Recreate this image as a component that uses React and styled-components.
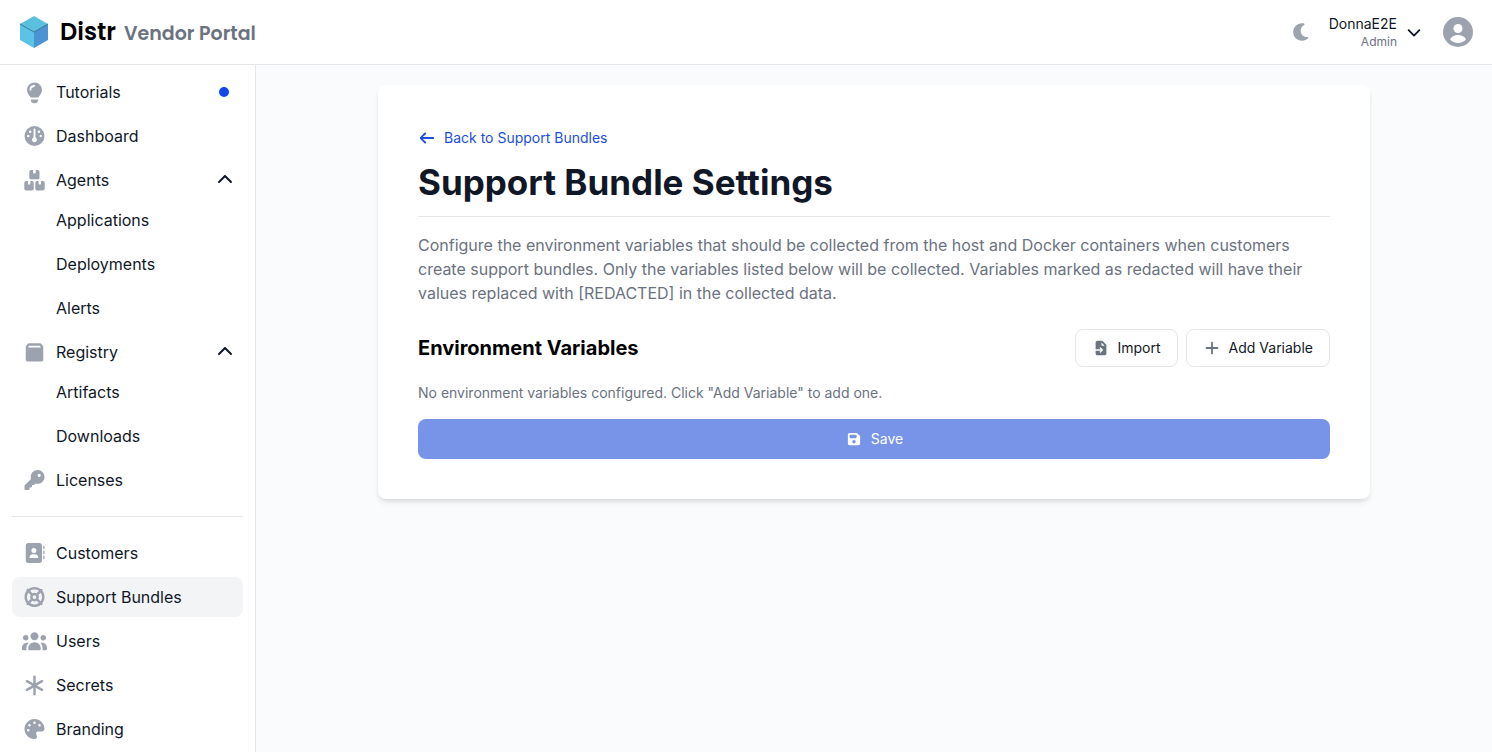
import styled, { createGlobalStyle } from "styled-components";
import {
  FaAddressBook,
  FaFloppyDisk,
  FaGauge,
  FaKey,
  FaLifeRing,
  FaPalette,
} from "react-icons/fa6";

const App = () => {
  return (
    <>
      <GlobalStyle />
      <Header>
        <Brand href="#">
          <Logo />
          <BrandText>
            <BrandName>Distr</BrandName>
            <PortalName>Vendor Portal</PortalName>
          </BrandText>
        </Brand>
        <HeaderRight>
          <ThemeButton aria-label="Toggle dark mode">
            <Icon d={paths.moon} />
          </ThemeButton>
          <OrgButton>
            <OrgText>
              <OrgName>DonnaE2E</OrgName>
              <OrgRole>Admin</OrgRole>
            </OrgText>
            <Icon d={paths.chevronDown} />
          </OrgButton>
          <AvatarButton aria-label="User menu">
            <Avatar />
          </AvatarButton>
        </HeaderRight>
      </Header>
      <Body>
        <Sidebar>
          <NavItem href="#">
            <Icon d={paths.lightbulb} />
            Tutorials
            <Dot />
          </NavItem>
          <NavItem href="#">
            <FaGauge />
            Dashboard
          </NavItem>
          <NavGroup>
            <NavToggle aria-expanded="true">
              <Icon d={paths.boxes} />
              Agents
              <Icon d={paths.chevronUp} />
            </NavToggle>
            <SubList>
              <SubItem href="#">Applications</SubItem>
              <SubItem href="#">Deployments</SubItem>
              <SubItem href="#">Alerts</SubItem>
            </SubList>
          </NavGroup>
          <NavGroup>
            <NavToggle aria-expanded="true">
              <Icon d={paths.box} />
              Registry
              <Icon d={paths.chevronUp} />
            </NavToggle>
            <SubList>
              <SubItem href="#">Artifacts</SubItem>
              <SubItem href="#">Downloads</SubItem>
            </SubList>
          </NavGroup>
          <NavItem href="#">
            <FaKey />
            Licenses
          </NavItem>
          <Divider />
          <NavItem href="#">
            <FaAddressBook />
            Customers
          </NavItem>
          <NavItem href="#" $active>
            <FaLifeRing />
            Support Bundles
          </NavItem>
          <NavItem href="#">
            <Icon d={paths.users} />
            Users
          </NavItem>
          <NavItem href="#">
            <Icon d={paths.asterisk} />
            Secrets
          </NavItem>
          <NavItem href="#">
            <FaPalette />
            Branding
          </NavItem>
        </Sidebar>
        <Main>
          <Card>
            <BackLink href="#">
              <Icon d={paths.arrowLeft} />
              Back to Support Bundles
            </BackLink>
            <Title>Support Bundle Settings</Title>
            <Description>
              Configure the environment variables that should be collected from
              the host and Docker containers when customers create support
              bundles. Only the variables listed below will be collected.
              Variables marked as redacted will have their values replaced with
              [REDACTED] in the collected data.
            </Description>
            <SectionHeader>
              <SectionTitle>Environment Variables</SectionTitle>
              <Actions>
                <OutlineButton>
                  <Icon d={paths.fileImport} />
                  Import
                </OutlineButton>
                <OutlineButton>
                  <Icon d={paths.plus} />
                  Add Variable
                </OutlineButton>
              </Actions>
            </SectionHeader>
            <EmptyText>
              No environment variables configured. Click "Add Variable" to add
              one.
            </EmptyText>
            <SaveButton disabled>
              <FaFloppyDisk />
              Save
            </SaveButton>
          </Card>
        </Main>
      </Body>
    </>
  );
};

export default App;

const paths = {
  moon: "M320 64C178.6 64 64 178.6 64 320C64 461.4 178.6 576 320 576C388.8 576 451.3 548.8 497.3 504.6C504.6 497.6 506.7 486.7 502.6 477.5C498.5 468.3 488.9 462.6 478.8 463.4C473.9 463.8 469 464 464 464C362.4 464 280 381.6 280 280C280 207.9 321.5 145.4 382.1 115.2C391.2 110.7 396.4 100.9 395.2 90.8C394 80.7 386.6 72.5 376.7 70.3C358.4 66.2 339.4 64 320 64z",
  chevronDown:
    "M297.4 470.6C309.9 483.1 330.2 483.1 342.7 470.6L534.7 278.6C547.2 266.1 547.2 245.8 534.7 233.3C522.2 220.8 501.9 220.8 489.4 233.3L320 402.7L150.6 233.4C138.1 220.9 117.8 220.9 105.3 233.4C92.8 245.9 92.8 266.2 105.3 278.7L297.3 470.7z",
  chevronUp:
    "M297.4 169.4C309.9 156.9 330.2 156.9 342.7 169.4L534.7 361.4C547.2 373.9 547.2 394.2 534.7 406.7C522.2 419.2 501.9 419.2 489.4 406.7L320 237.3L150.6 406.6C138.1 419.1 117.8 419.1 105.3 406.6C92.8 394.1 92.8 373.8 105.3 361.3L297.3 169.3z",
  lightbulb:
    "M420.9 448C428.2 425.7 442.8 405.5 459.3 388.1C492 353.7 512 307.2 512 256C512 150 426 64 320 64C214 64 128 150 128 256C128 307.2 148 353.7 180.7 388.1C197.2 405.5 211.9 425.7 219.1 448L420.8 448zM416 496L224 496L224 512C224 556.2 259.8 592 304 592L336 592C380.2 592 416 556.2 416 512L416 496zM312 176C272.2 176 240 208.2 240 248C240 261.3 229.3 272 216 272C202.7 272 192 261.3 192 248C192 181.7 245.7 128 312 128C325.3 128 336 138.7 336 152C336 165.3 325.3 176 312 176z",
  boxes:
    "M232 54H284V124Q284 142 300 142H336Q352 142 352 124V54H404Q448 54 448 98V248Q448 288 408 288H228Q188 288 188 248V98Q188 54 232 54zM108 332H152V402Q152 420 168 420H198Q214 420 214 402V332H256Q300 332 300 376V532Q300 576 256 576H108Q58 576 58 532V376Q58 332 108 332zM384 332H426V402Q426 420 442 420H472Q488 420 488 402V332H532Q582 332 582 376V532Q582 576 532 576H384Q340 576 340 532V376Q340 332 384 332z",
  box: "M182 84H458Q486 84 502 106L532 148Q544 164 544 186V496Q544 552 488 552H152Q96 552 96 496V186Q96 164 108 148L138 106Q154 84 182 84zM186 148Q180 148 176 153L160 180Q154 192 168 192H472Q486 192 480 180L464 153Q460 148 454 148z",
  users:
    "M320 80C377.4 80 424 126.6 424 184C424 241.4 377.4 288 320 288C262.6 288 216 241.4 216 184C216 126.6 262.6 80 320 80zM96 152C135.8 152 168 184.2 168 224C168 263.8 135.8 296 96 296C56.2 296 24 263.8 24 224C24 184.2 56.2 152 96 152zM0 480C0 409.3 57.3 352 128 352C140.8 352 153.2 353.9 164.9 357.4C132 394.2 112 442.8 112 496L112 512C112 523.4 114.4 534.2 118.7 544L32 544C14.3 544 0 529.7 0 512L0 480zM521.3 544C525.6 534.2 528 523.4 528 512L528 496C528 442.8 508 394.2 475.1 357.4C486.8 353.9 499.2 352 512 352C582.7 352 640 409.3 640 480L640 512C640 529.7 625.7 544 608 544L521.3 544zM472 224C472 184.2 504.2 152 544 152C583.8 152 616 184.2 616 224C616 263.8 583.8 296 544 296C504.2 296 472 263.8 472 224zM160 496C160 407.6 231.6 336 320 336C408.4 336 480 407.6 480 496L480 512C480 529.7 465.7 544 448 544L192 544C174.3 544 160 529.7 160 512L160 496z",
  asterisk:
    "M320 64C337.7 64 352 78.3 352 96V264.600L496.500 181.200C511.800 172.400 531.400 177.600 540.200 192.900C549 208.200 543.800 227.800 528.500 236.600L384 320L528.500 403.400C543.800 412.200 549 431.800 540.200 447.100C531.400 462.400 511.800 467.600 496.500 458.800L352 375.400V544C352 561.700 337.700 576 320 576C302.300 576 288 561.700 288 544V375.400L143.500 458.800C128.200 467.600 108.600 462.400 99.800 447.100C91 431.800 96.200 412.200 111.500 403.400L256 320L111.500 236.600C96.200 227.800 91 208.200 99.800 192.900C108.600 177.600 128.200 172.400 143.500 181.200L288 264.600V96C288 78.300 302.300 64 320 64z",
  arrowLeft:
    "M73.4 297.4C60.9 309.9 60.9 330.2 73.4 342.7L233.4 502.7C245.9 515.2 266.2 515.2 278.7 502.7C291.2 490.2 291.2 469.9 278.7 457.4L173.3 352L544 352C561.7 352 576 337.7 576 320C576 302.3 561.7 288 544 288L173.3 288L278.7 182.6C291.2 170.1 291.2 149.8 278.7 137.3C266.2 124.8 245.9 124.8 233.4 137.3L73.4 297.3z",
  fileImport:
    "M192 64C156.7 64 128 92.7 128 128L128 368L310.1 368L279.1 337C269.7 327.6 269.7 312.4 279.1 303.1C288.5 293.8 303.7 293.7 313 303.1L385 375.1C394.4 384.5 394.4 399.7 385 409L313 481C303.6 490.4 288.4 490.4 279.1 481C269.8 471.6 269.7 456.4 279.1 447.1L310.1 416.1L128 416.1L128 512.1C128 547.4 156.7 576.1 192 576.1L448 576.1C483.3 576.1 512 547.4 512 512.1L512 234.6C512 217.6 505.3 201.3 493.3 189.3L386.7 82.7C374.7 70.7 358.5 64 341.5 64L192 64zM453.5 240L360 240C346.7 240 336 229.3 336 216L336 122.5L453.5 240z",
  plus: "M352 128C352 110.3 337.7 96 320 96C302.3 96 288 110.3 288 128L288 288L128 288C110.3 288 96 302.3 96 320C96 337.7 110.3 352 128 352L288 352L288 512C288 529.7 302.3 544 320 544C337.7 544 352 529.7 352 512L352 352L512 352C529.7 352 544 337.7 544 320C544 302.3 529.7 288 512 288L352 288L352 128z",
};

const Icon = ({ d }) => (
  <svg viewBox="0 0 640 640" fill="currentColor" aria-hidden="true">
    <path d={d} fillRule="evenodd" />
  </svg>
);

const Logo = () => (
  <svg width="28" height="32" viewBox="0 0 28 32" aria-hidden="true">
    <path d="M14 0 28 8 14 16 0 8Z" fill="#5bc0de" />
    <path d="M0 8 14 16V32L0 24Z" fill="#5cc3e6" />
    <path d="M28 8 14 16V32L28 24Z" fill="#4a94d4" />
    <path d="M0 8 14 16 28 8" fill="none" stroke="#23648c" strokeWidth="0.8" />
  </svg>
);

const Avatar = () => (
  <svg width="30" height="30" viewBox="0 0 30 30" aria-hidden="true">
    <circle cx="15" cy="15" r="15" fill="#9ca3af" />
    <circle cx="15" cy="11.5" r="4.5" fill="#fff" />
    <path
      d="M7 22.5c1.2-3 4.3-4.5 8-4.5s6.8 1.5 8 4.5c-2 2.3-4.8 3.5-8 3.5s-6-1.2-8-3.5Z"
      fill="#fff"
    />
  </svg>
);

const GlobalStyle = createGlobalStyle`
  * {
    box-sizing: border-box;
  }
  body {
    margin: 0;
    background: #f9fbfd;
    color: #101828;
    font-family: Inter, "Liberation Sans", sans-serif;
    font-size: 16px;
    line-height: 24px;
  }
  #root {
    display: flex;
    flex-direction: column;
    height: 100vh;
  }
  a {
    color: inherit;
    text-decoration: none;
  }
  button {
    margin: 0;
    padding: 0;
    border: none;
    background: none;
    color: inherit;
    font: inherit;
  }
  svg {
    flex: none;
  }
`;

const Header = styled.header`
  display: flex;
  flex: none;
  align-items: center;
  justify-content: space-between;
  height: 65px;
  padding: 0 19px 0 20px;
  border-bottom: 1px solid #e5e7eb;
  background: #ffffff;
`;

const Brand = styled.a`
  display: flex;
  align-items: center;
  gap: 12px;
  font-family: Poppins, Inter, sans-serif;
  font-weight: 600;
`;

const BrandText = styled.span`
  display: flex;
  align-items: baseline;
  gap: 8px;
  padding-top: 2px;
`;

const BrandName = styled.span`
  color: #000000;
  font-size: 24px;
`;

const PortalName = styled.span`
  color: #6b7280;
  font-size: 19px;
`;

const HeaderRight = styled.div`
  display: flex;
  align-items: center;
`;

const ThemeButton = styled.button`
  display: flex;
  color: #9ca3af;
  svg {
    width: 22px;
    height: 22px;
  }
`;

const OrgButton = styled.button`
  display: flex;
  align-items: center;
  gap: 8px;
  margin: 0 20px 0 16px;
  svg {
    width: 18px;
    height: 18px;
  }
`;

const OrgText = styled.span`
  display: flex;
  flex-direction: column;
  text-align: right;
`;

const OrgName = styled.span`
  font-size: 14px;
  line-height: 20px;
`;

const OrgRole = styled.span`
  color: #6b7280;
  font-size: 12px;
  line-height: 16px;
`;

const AvatarButton = styled.button`
  display: flex;
`;

const Body = styled.div`
  display: flex;
  flex: 1;
  min-height: 0;
`;

const Sidebar = styled.nav`
  display: flex;
  flex: none;
  flex-direction: column;
  gap: 4px;
  width: 256px;
  padding: 7px 12px;
  overflow: hidden;
  border-right: 1px solid #e5e7eb;
  background: #ffffff;
`;

const NavItem = styled.a`
  display: flex;
  flex: none;
  align-items: center;
  gap: 9px;
  width: 100%;
  height: 40px;
  padding: 0 8px 0 10px;
  border-radius: 8px;
  background: ${({ $active }) => ($active ? "#f3f4f6" : "transparent")};
  svg:first-child {
    width: 25px;
    height: 20px;
    color: #9ca3af;
  }
  svg[viewBox="0 0 640 640"]:first-child {
    height: 25px;
  }
`;

const NavToggle = styled(NavItem).attrs({ as: "button" })`
  svg:last-child {
    width: 20px;
    height: 20px;
    margin-left: auto;
  }
`;

const Dot = styled.span`
  width: 10px;
  height: 10px;
  margin: 0 6px 0 auto;
  border-radius: 50%;
  background: #1447e6;
`;

const NavGroup = styled.div`
  flex: none;
`;

const SubList = styled.div`
  display: flex;
  flex-direction: column;
  gap: 4px;
`;

const SubItem = styled(NavItem)`
  padding-left: 44px;
`;

const Divider = styled.hr`
  flex: none;
  width: 100%;
  margin: 12px 0;
  border: none;
  border-top: 1px solid #e5e7eb;
`;

const Main = styled.main`
  flex: 1;
  padding: 20px;
`;

const Card = styled.section`
  max-width: 992px;
  margin: 0 auto;
  padding: 40px;
  border-radius: 8px;
  background: #ffffff;
  box-shadow: 0 4px 6px -1px rgba(0, 0, 0, 0.1),
    0 2px 4px -2px rgba(0, 0, 0, 0.1);
`;

const BackLink = styled.a`
  display: flex;
  align-items: center;
  gap: 8px;
  width: fit-content;
  color: #1d4ed8;
  font-size: 14px;
  line-height: 26px;
  svg {
    width: 18px;
    height: 18px;
  }
`;

const Title = styled.h1`
  margin: 11px 0 16px;
  padding-bottom: 14px;
  border-bottom: 1px solid #e5e7eb;
  font-size: 35px;
  font-weight: 700;
  line-height: 40px;
`;

const Description = styled.p`
  margin: 0 0 24px;
  color: #6b7280;
`;

const SectionHeader = styled.div`
  display: flex;
  align-items: center;
  justify-content: space-between;
  margin-bottom: 16px;
`;

const SectionTitle = styled.h2`
  margin: 0;
  color: #000000;
  font-size: 20px;
  font-weight: 700;
  line-height: 28px;
`;

const Actions = styled.div`
  display: flex;
  gap: 8px;
`;

const OutlineButton = styled.button`
  display: flex;
  align-items: center;
  gap: 8px;
  height: 38px;
  padding: 0 16px;
  border: 1px solid #e5e7eb;
  border-radius: 8px;
  font-size: 14px;
  line-height: 20px;
  svg {
    width: 18px;
    height: 18px;
    color: #6b7280;
  }
`;

const EmptyText = styled.p`
  margin: 0 0 16px;
  color: #6b7280;
  font-size: 14px;
  line-height: 20px;
`;

const SaveButton = styled.button`
  display: flex;
  align-items: center;
  justify-content: center;
  gap: 8px;
  width: 100%;
  height: 40px;
  border-radius: 8px;
  background: #7794e8;
  color: #ffffff;
  font-size: 14px;
  line-height: 20px;
  svg {
    width: 18px;
    height: 14px;
  }
`;
